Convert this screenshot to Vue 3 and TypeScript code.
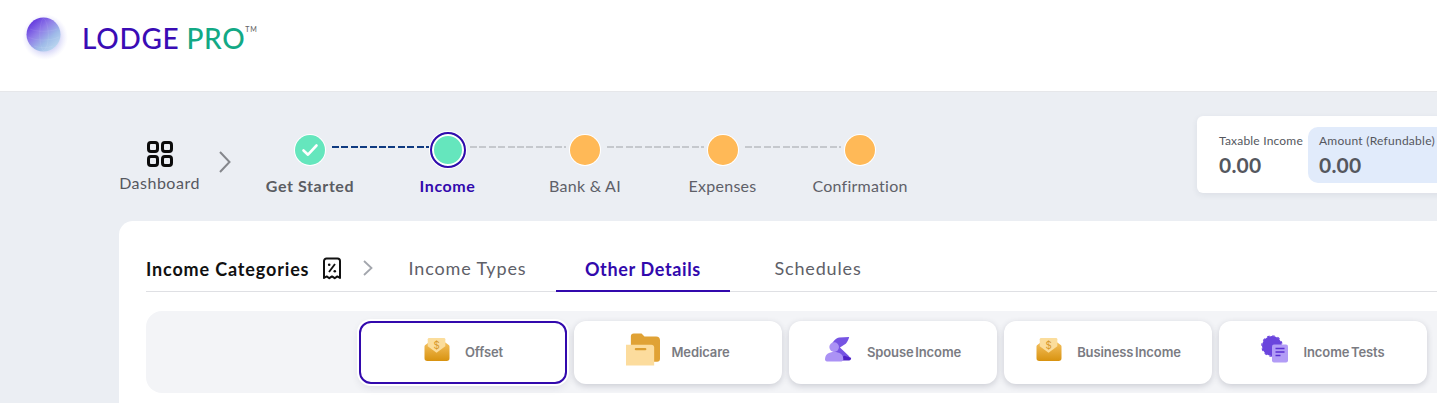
<script setup lang="ts">
interface Step { label: string; state: 'done' | 'current' | 'todo' }
const steps: Step[] = [
  { label: 'Get Started', state: 'done' },
  { label: 'Income', state: 'current' },
  { label: 'Bank & AI', state: 'todo' },
  { label: 'Expenses', state: 'todo' },
  { label: 'Confirmation', state: 'todo' },
]
const cards = [
  { label: 'Offset', icon: 'mail', selected: true, gap: 14 },
  { label: 'Medicare', icon: 'folder', selected: false, gap: 11 },
  { label: 'Spouse Income', icon: 'people', selected: false, gap: 15 },
  { label: 'Business Income', icon: 'mail', selected: false, gap: 14 },
  { label: 'Income Tests', icon: 'badge', selected: false, gap: 14 },
]
</script>

<template>
  <div class="page">
    <header class="header">
      <svg class="globe" width="48" height="48" viewBox="0 0 48 48">
        <defs>
          <radialGradient id="glow" cx="50%" cy="50%" r="50%">
            <stop offset="65%" stop-color="#cfd0f6" stop-opacity=".75" />
            <stop offset="100%" stop-color="#e6e4fb" stop-opacity="0" />
          </radialGradient>
          <linearGradient id="ball" x1="15%" y1="10%" x2="85%" y2="90%">
            <stop offset="0%" stop-color="#6236de" />
            <stop offset="35%" stop-color="#8f7be8" />
            <stop offset="70%" stop-color="#9fbbe8" />
            <stop offset="100%" stop-color="#bcd8f0" />
          </linearGradient>
        </defs>
        <circle cx="25" cy="25" r="23" fill="url(#glow)" />
        <circle cx="23.500" cy="22.500" r="17" fill="url(#ball)" />
        <path d="M10 17c6 3 20 3 27 0M8 25c8 4 22 4 31 0M14 34c5 2 14 2 19 0M23.500 6c-5 5-5 28 0 33M23.500 6c6 5 7 28 0 33" fill="none" stroke="#fff" stroke-opacity=".07" stroke-width="1" />
      </svg>
      <div class="brand">
        <span class="brand-a">LODGE</span>
        <span class="brand-b">PRO</span>
        <sup class="tm">TM</sup>
      </div>
    </header>

    <main class="main">
      <section class="top">
        <div class="dash">
          <svg width="28" height="28" viewBox="0 0 28 28" fill="none" stroke="#0b0b0b" stroke-width="3">
            <rect x="2.500" y="2.500" width="9" height="9" rx="2.400" />
            <rect x="16.500" y="2.500" width="9" height="9" rx="2.400" />
            <rect x="2.500" y="16.500" width="9" height="9" rx="2.400" />
            <rect x="16.500" y="16.500" width="9" height="9" rx="2.400" />
          </svg>
          <span>Dashboard</span>
        </div>
        <svg class="dash-chev" width="14" height="24" viewBox="0 0 14 24" fill="none" stroke="#85878c" stroke-width="2">
          <path d="M2 2l9.500 10L2 22" />
        </svg>

        <div class="stepper">
          <template v-for="(s, i) in steps" :key="s.label">
            <div class="dot" :class="s.state">
              <svg v-if="s.state === 'done'" width="20" height="16" viewBox="0 0 20 16" fill="none" stroke="#fff" stroke-width="2.600" stroke-linecap="round" stroke-linejoin="round">
                <path d="M3.500 8.500l4.500 4.200L16.500 3.500" />
              </svg>
            </div>
            <div v-if="i < steps.length - 1" class="link" :class="{ on: i === 0 }"></div>
          </template>
          <div
            v-for="(s, i) in steps"
            :key="s.label + '-l'"
            class="step-label"
            :class="s.state"
            :style="{ gridColumn: i * 2 + 1 }"
          >{{ s.label }}</div>
        </div>

        <aside class="summary">
          <div class="sum-cell">
            <span class="sum-k">Taxable Income</span>
            <strong class="sum-v">0.00</strong>
          </div>
          <div class="sum-cell blue">
            <span class="sum-k">Amount (Refundable) ATO</span>
            <strong class="sum-v">0.00</strong>
          </div>
        </aside>
      </section>

      <section class="panel">
        <nav class="tabs">
          <span class="tabs-title">Income Categories</span>
          <svg class="receipt" width="20" height="24" viewBox="0 0 20 24" fill="none" stroke="#111" stroke-width="2">
            <path d="M2 21V4a2.500 2.500 0 0 1 2.500-2.500h11A2.500 2.500 0 0 1 18 4v17l-2.700-1.600-2.600 1.800-2.700-1.800-2.700 1.800-2.600-1.800z" stroke-linejoin="round" />
            <path d="M13 7l-6 8" stroke-width="1.800" />
            <circle cx="7.200" cy="7.800" r="1.300" fill="#111" stroke="none" />
            <circle cx="12.800" cy="14.200" r="1.300" fill="#111" stroke="none" />
          </svg>
          <svg class="tabs-chev" width="12" height="18" viewBox="0 0 12 18" fill="none" stroke="#a3a6ad" stroke-width="1.800">
            <path d="M2 2l7.500 7L2 16" />
          </svg>
          <a class="tab first">Income Types</a>
          <a class="tab active">Other Details</a>
          <a class="tab last">Schedules</a>
        </nav>

        <div class="strip">
          <div v-for="c in cards" :key="c.label" class="card" :class="{ selected: c.selected }">
            <svg v-if="c.icon === 'mail'" class="ic" width="28" height="25" viewBox="0 0 30 27">
              <defs>
                <linearGradient id="mailG" x1="0" y1="0" x2="0" y2="1">
                  <stop offset="0" stop-color="#f3bf5c" />
                  <stop offset="1" stop-color="#d8920f" />
                </linearGradient>
              </defs>
              <path d="M2 9l4-3h18l4 3a2 2 0 0 1 .5 1.500V23a3 3 0 0 1-3 3H4.500a3 3 0 0 1-3-3V10.500A2 2 0 0 1 2 9z" fill="url(#mailG)" />
              <path d="M5 2.500A1.500 1.500 0 0 1 6.500 1h16A1.500 1.500 0 0 1 24 2.500V10l-9.500 7L5 10z" fill="#fbdd9c" />
              <text x="14.500" y="12.500" text-anchor="middle" font-size="10.500" font-family="Inter, sans-serif" fill="#d89a2c">$</text>
            </svg>
            <svg v-else-if="c.icon === 'folder'" class="ic" width="34" height="35" viewBox="0 0 35 35">
              <path d="M5 4a3 3 0 0 1 3-3h8l3 3h12a4 4 0 0 1 4 4v19a3 3 0 0 1-3 3H5z" fill="#e0a235" />
              <path d="M0 12.500h26a3 3 0 0 1 3 3V34H0z" fill="#fcdc9d" />
              <rect x="9" y="16" width="12" height="2.400" rx="1.200" fill="#dc9d2e" />
            </svg>
            <svg v-else-if="c.icon === 'people'" class="ic" width="27" height="26" viewBox="0 0 28 26">
              <path d="M6 12C7 6 11 1.500 15 1l10-.500c0 1-1.500 5-3.500 7l-6 4 8.500 8c2 1.500 2 3.500 2 5H16z" fill="#7654e3" />
              <path d="M20 20l7 2c.5 1.500-1 2.800-2 3H13z" fill="#4f22c6" />
              <circle cx="9.500" cy="11" r="5" fill="#ab92f5" />
              <path d="M0 24c0-6 4-8 9.500-8s9.500 2 9.500 8c0 1-1 2-2 2H2c-1 0-2-1-2-2z" fill="#ab92f5" />
            </svg>
            <svg v-else class="ic" width="28" height="28" viewBox="0 0 28 28">
              <circle cx="11" cy="11" r="10" fill="#6a44dd" />
              <circle cx="11" cy="11" r="10.200" fill="none" stroke="#6a44dd" stroke-width="1.200" stroke-dasharray="2.600 2.740" />
              <rect x="11" y="9.500" width="16" height="18" rx="2" fill="#b29cf6" />
              <path d="M14.500 13.500h9M14.500 17h9M14.500 20.500h5" stroke="#5a2fd2" stroke-width="1.600" fill="none" />
            </svg>
            <span class="card-label" :style="{ marginLeft: c.gap + 'px' }">{{ c.label }}</span>
          </div>
        </div>
      </section>
    </main>
  </div>
</template>

<style>
html, body { margin: 0; overflow: hidden; background: #ebeef3; }
</style>

<style scoped>
.page {
  width: 1437px;
  height: 403px;
  overflow: hidden;
  background: #ebeef3;
  font-family: Lato, "Noto Sans", sans-serif;
  display: flex;
  flex-direction: column;
}
.header {
  height: 92px;
  flex: none;
  background: #fff;
  border-bottom: 1px solid #e6e7ea;
  box-sizing: border-box;
  display: flex;
  align-items: center;
  padding: 0 0 19px 20px;
}
.globe { flex: none; }
.brand {
  margin-left: 14px;
  font-size: 28px;
  font-weight: 500;
  display: flex;
  align-items: baseline;
  gap: 7px;
  letter-spacing: .7px;
  padding-top: 4px;
}
.brand-a { color: #3a0cb5; }
.brand-b { color: #12a985; }
.tm { font-size: 7px; color: #666; margin-left: -7px; align-self: flex-start; margin-top: 4px; }
.main { flex: 1; display: flex; flex-direction: column; min-height: 0; }
.top {
  height: 129px;
  flex: none;
  display: flex;
  align-items: flex-start;
}
.dash {
  margin: 48px 0 0 119px;
  width: 81px;
  flex: none;
  display: flex;
  flex-direction: column;
  align-items: center;
  gap: 5px;
  color: #56585f;
  font-size: 16px;
  letter-spacing: .5px;
  white-space: nowrap;
}
.dash-chev { margin: 58px 0 0 18px; flex: none; }
.stepper {
  margin: 39px 0 0 63px;
  display: grid;
  grid-template-columns: 30px 107.5px 30px 107.5px 30px 107.5px 30px 107.5px 30px;
  grid-template-rows: 38px auto;
  row-gap: 7px;
  flex: none;
}
.dot {
  width: 30px;
  height: 30px;
  border-radius: 50%;
  align-self: center;
  justify-self: center;
  box-sizing: border-box;
  display: flex;
  align-items: center;
  justify-content: center;
  background: #ffb957;
  box-shadow: 0 0 0 1px #fff;
}
.dot.done { background: #65e6bd; }
.dot.current {
  width: 36px;
  height: 36px;
  background: #65e6bd;
  border: 2px solid #3209ad;
  box-shadow: inset 0 0 0 2px #fff, 0 0 0 1px #fff;
}
.link {
  height: 2px;
  align-self: center;
  margin: -6px 4px 0 7px;
  background: repeating-linear-gradient(90deg, #c5c8cd 0 7px, transparent 7px 9.4px);
}
.link.on {
  background: repeating-linear-gradient(90deg, #0f3a80 0 7px, transparent 7px 9.4px);
}
.step-label {
  grid-row: 2;
  justify-self: center;
  white-space: nowrap;
  font-size: 16px;
  letter-spacing: .25px;
  color: #5e6068;
}
.step-label.done { font-weight: 700; color: #5a5c62; letter-spacing: .6px; }
.step-label.current { font-weight: 700; color: #3209ad; letter-spacing: .6px; }
.summary {
  margin: 24px 0 0 322px;
  flex: none;
  width: 300px;
  height: 77px;
  background: #fff;
  border-radius: 6px;
  box-shadow: 0 2px 6px rgba(40, 50, 80, .08);
  display: flex;
  align-items: center;
  padding-left: 22px;
  box-sizing: border-box;
}
.sum-cell {
  display: flex;
  flex-direction: column;
  gap: 5px;
  width: 89px;
  flex: none;
  height: 56px;
  justify-content: center;
  box-sizing: border-box;
}
.sum-cell.blue {
  width: 180px;
  background: #e1ebfb;
  border-radius: 10px 0 0 10px;
  padding-left: 11px;
  overflow: hidden;
}
.sum-k { font-size: 12px; color: #55575e; white-space: nowrap; letter-spacing: .2px; }
.sum-cell.blue .sum-k { letter-spacing: .25px; }
.sum-v { font-size: 21px; font-weight: 700; color: #55575e; line-height: 24px; letter-spacing: .2px; }
.panel {
  margin-left: 119px;
  flex: 1;
  background: #fff;
  border-radius: 14px 0 0 0;
  padding-left: 27px;
  min-height: 0;
}
.tabs {
  height: 71px;
  box-sizing: border-box;
  border-bottom: 1px solid #dfe0e4;
  display: flex;
  align-items: flex-end;
}
.tabs-title {
  font-size: 18px;
  font-weight: 700;
  letter-spacing: .85px;
  color: #111;
  line-height: 22px;
  padding-bottom: 11px;
  width: 163px;
  flex: none;
  white-space: nowrap;
}
.receipt { margin: 0 0 10px 13px; flex: none; }
.tabs-chev { margin: 0 0 14px 20px; flex: none; }
.tab {
  font-size: 18px;
  color: #5e6068;
  line-height: 22px;
  padding: 0 29.5px 12px;
  height: 36px;
  box-sizing: border-box;
  display: flex;
  align-items: flex-end;
  white-space: nowrap;
  letter-spacing: .85px;
}
.tab.first { margin-left: 5px; }
.tab.active {
  color: #3209ad;
  font-weight: 700;
  border-bottom: 2px solid #3209ad;
  padding-bottom: 10px;
  margin-bottom: -1px;
  width: 174px;
  justify-content: center;
  padding-inline: 0;
  letter-spacing: .65px;
}
.tab.last { margin-left: 15px; }
.strip {
  margin-top: 19px;
  height: 82px;
  background: #f3f4f7;
  border-radius: 16px 0 0 16px;
  display: flex;
  align-items: center;
  gap: 7px;
  padding-left: 213px;
  box-sizing: border-box;
}
.card {
  width: 208px;
  height: 63px;
  flex: none;
  background: #fff;
  border-radius: 12px;
  box-shadow: 0 2px 6px rgba(40, 45, 70, .2);
  box-sizing: border-box;
  display: flex;
  align-items: center;
  justify-content: center;
}
.card.selected {
  border: 2px solid #3209ad;
  box-shadow: 0 0 0 2px #fff, 0 3px 8px rgba(40, 45, 70, .12);
}
.ic { flex: none; margin-top: -6px; }
.card-label {
  font-family: Inter, sans-serif;
  font-size: 13px;
  font-weight: 600;
  color: #7a7b82;
  letter-spacing: -.1px;
  word-spacing: -1.5px;
  white-space: nowrap;
}
</style>
